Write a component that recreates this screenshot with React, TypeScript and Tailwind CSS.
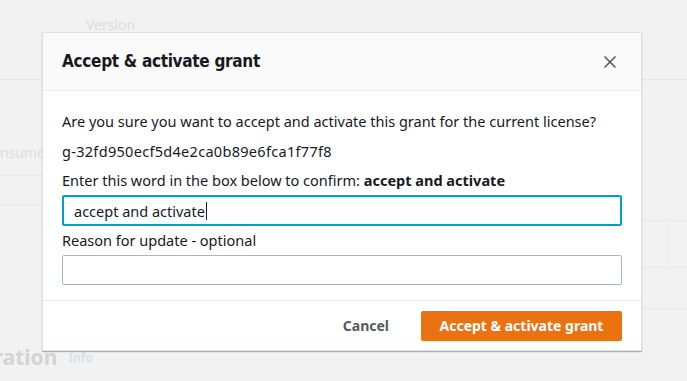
import { X } from "lucide-react";

const font = { fontFamily: '"Noto Sans", "Open Sans", sans-serif' };

// faded page behind the dialog
function Backdrop() {
  return (
    <div className="flex h-full flex-col bg-[#f2f2f2] text-[#dcdcdc]">
      <div className="h-[80px] border-b border-[#e4e4e4] pl-[86px] pt-[14px] text-[14px]">Version</div>
      <div className="flex flex-1">
        <div className="w-1/2">
          <div className="h-[95px] pt-[62px] text-[14px] whitespace-nowrap">nsume a</div>
          <div className="h-[29px] border-t border-[#e8e8e8]" />
          <div className="h-[100px] border-t border-[#e8e8e8]" />
        </div>
        <div className="w-1/2">
          <div className="h-[140px]" />
          <div className="flex h-[47px] border-t border-[#e8e8e8]">
            <div className="flex-1" />
            <div className="flex w-[44px] items-center border-r border-[#ececec] text-[10px]">▼</div>
            <div className="w-[18px]" />
          </div>
          <div className="h-[41px] border-t border-[#e8e8e8]" />
          <div className="border-t border-[#e8e8e8]" />
        </div>
      </div>
      <div className="flex h-[46px] items-center gap-[11px] whitespace-nowrap">
        <span className="-ml-[20px] text-[21px] font-bold text-[#d4d4d4]">uration</span>
        <span className="text-[12px] font-bold text-[#d3e3ef]">Info</span>
      </div>
    </div>
  );
}

function Dialog() {
  return (
    <div className="absolute left-[42px] top-[32px] w-[600px] border border-[#e0e0e0] bg-white shadow-[0_1px_1px_rgba(0,28,36,0.3)]">
      <div className="flex h-[58px] items-center justify-between border-b border-[#eaeded] bg-[#fafafa] pl-[19px] pr-[21px]">
        <h2
          className="text-[17px] font-bold tracking-[-0.3px] text-[#16191f]"
          style={{ fontFamily: '"DejaVu Sans Condensed", "DejaVu Sans", sans-serif', fontStretch: "condensed" }}
        >
          Accept &amp; activate grant
        </h2>
        <X size={20} strokeWidth={2} className="text-[#545b64]" />
      </div>

      <div className="flex flex-col px-[19px] pt-[19px] pb-[15px] text-[14.5px] leading-[22px] text-[#16191f]">
        <p>Are you sure you want to accept and activate this grant for the current license?</p>
        <p className="mt-[8px] tracking-[0.3px]">g-32fd950ecf5d4e2ca0b89e6fca1f77f8</p>
        <p className="mt-[7px]">
          Enter this word in the box below to confirm: <span className="font-bold">accept and activate</span>
        </p>
        <div className="mt-[4px] flex h-[31px] items-center rounded-[2px] border-2 border-[#00a1c9] px-[10px]">
          accept and activate<span className="ml-px h-[18px] w-px bg-[#16191f]" />
        </div>
        <p className="mt-[3px]">Reason for update - optional</p>
        <div className="mt-[4px] h-[30px] rounded-[2px] border border-[#aab7b8]" />
      </div>

      <div className="flex h-[50px] items-center justify-end gap-[32px] border-t border-[#eaeded] pr-[19px]">
        <button className="text-[14px] font-bold text-[#545b64]">Cancel</button>
        <button className="h-[30px] w-[201px] rounded-[2px] bg-[#ec7211] text-[14px] font-bold text-white">
          Accept &amp; activate grant
        </button>
      </div>
    </div>
  );
}

export default function App() {
  return (
    <div className="relative h-[381px] w-[687px] overflow-hidden" style={font}>
      <Backdrop />
      <Dialog />
    </div>
  );
}
